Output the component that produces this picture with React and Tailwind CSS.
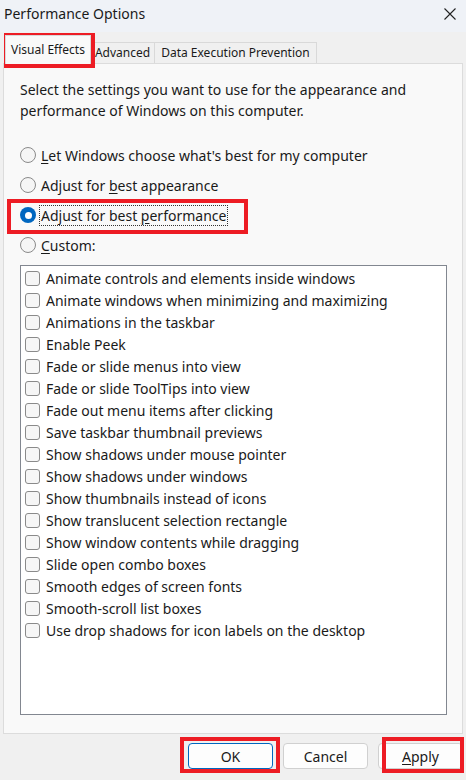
import React from 'react';

const options = [
  'Animate controls and elements inside windows',
  'Animate windows when minimizing and maximizing',
  'Animations in the taskbar',
  'Enable Peek',
  'Fade or slide menus into view',
  'Fade or slide ToolTips into view',
  'Fade out menu items after clicking',
  'Save taskbar thumbnail previews',
  'Show shadows under mouse pointer',
  'Show shadows under windows',
  'Show thumbnails instead of icons',
  'Show translucent selection rectangle',
  'Show window contents while dragging',
  'Slide open combo boxes',
  'Smooth edges of screen fonts',
  'Smooth-scroll list boxes',
  'Use drop shadows for icon labels on the desktop',
];

function Radio({ checked, children, focused }) {
  return (
    <div className="flex items-center h-[30px]">
      {checked ? (
        <span className="w-[16px] h-[16px] rounded-full bg-[#0067c0] flex items-center justify-center">
          <span className="w-[7px] h-[7px] rounded-full bg-white" />
        </span>
      ) : (
        <span className="w-[16px] h-[16px] rounded-full border border-[#8a8a8a] bg-[#f5f5f5]" />
      )}
      <span
        className={`ml-[4px] leading-[19px] px-[1px] ${
          focused ? 'outline outline-1 outline-dotted outline-[#333]' : ''
        }`}
      >
        {children}
      </span>
    </div>
  );
}

function RedBox({ className }) {
  return <div className={`absolute border-4 border-[#ed1c24] pointer-events-none ${className}`} />;
}

export default function App() {
  return (
    <div
      className="relative w-[466px] h-[780px] overflow-hidden bg-[#f0f0f0] text-[#1a1a1a]"
      style={{ fontFamily: '"Noto Sans", "Open Sans", sans-serif' }}
    >
      {/* title bar */}
      <div className="h-[32px] bg-[#eff2f7] flex items-center justify-between pl-[4px] pr-[10px]">
        <span className="text-[14px] leading-none -mt-[4px]">Performance Options</span>
        <svg width="12" height="12" viewBox="0 0 12 12" className="-mt-[4px]">
          <path d="M0.5 0.5 L11.5 11.5 M11.5 0.5 L0.5 11.5" stroke="#222" strokeWidth="1.1" />
        </svg>
      </div>

      {/* tabs */}
      <div className="px-[3px]">
        <div className="flex items-end h-[31px] pl-[2px] text-[12px]">
          <div className="h-[29px] -mb-[1px] relative z-10 px-[5px] bg-[#f9f9f9] border border-b-0 border-[#d9d9d9] flex items-center">
            Visual Effects
          </div>
          <div className="h-[21px] px-[4px] border border-l-0 border-b-0 border-[#d9d9d9] bg-[#f0f0f0] flex items-center">
            Advanced
          </div>
          <div className="h-[21px] px-[6px] border border-l-0 border-b-0 border-[#d9d9d9] bg-[#f0f0f0] flex items-center">
            Data Execution Prevention
          </div>
        </div>

        {/* panel */}
        <div className="h-[671px] border border-[#dcdcdc] bg-[#f9f9f9] pl-[16px] pt-[15px] text-[14px]">
          <p className="leading-[21px] w-[420px]">
            Select the settings you want to use for the appearance and performance of Windows on this computer.
          </p>

          <div className="mt-[19px]">
            <Radio>
              <span className="underline underline-offset-2">L</span>et Windows choose what's best for my computer
            </Radio>
            <Radio>
              Adjust for <span className="underline underline-offset-2">b</span>est appearance
            </Radio>
            <Radio checked focused>
              Adjust for best <span className="underline underline-offset-2">p</span>erformance
            </Radio>
            <Radio>
              <span className="underline underline-offset-2">C</span>ustom:
            </Radio>
          </div>

          <div className="mt-[5px] w-[427px] h-[450px] border border-[#828790] bg-white pt-[1px] pl-[4px]">
            {options.map((o) => (
              <div key={o} className="flex items-center h-[22px]">
                <span className="w-[15px] h-[15px] rounded-[3px] border border-[#8a8a8a] bg-[#f6f6f6]" />
                <span className="ml-[6px]">{o}</span>
              </div>
            ))}
          </div>
        </div>
      </div>

      {/* buttons */}
      <div className="flex justify-end gap-[10px] pr-[3px] pt-[9px] text-[14px]">
        <button className="w-[85px] h-[26px] rounded-[4px] bg-[#fdfdfd] border border-[#0067c0]">OK</button>
        <button className="w-[85px] h-[26px] rounded-[4px] bg-[#fdfdfd] border border-[#d0d0d0]">Cancel</button>
        <button className="w-[85px] h-[26px] rounded-[4px] bg-[#fdfdfd] border border-[#d0d0d0]">
          <span className="underline underline-offset-2">A</span>pply
        </button>
      </div>

      {/* annotations */}
      <RedBox className="left-[4px] top-[33px] w-[91px] h-[35px]" />
      <RedBox className="left-[7px] top-[199px] w-[241px] h-[35px]" />
      <RedBox className="left-[180px] top-[737px] w-[100px] h-[36px]" />
      <RedBox className="left-[382px] top-[737px] w-[82px] h-[36px]" />
    </div>
  );
}
